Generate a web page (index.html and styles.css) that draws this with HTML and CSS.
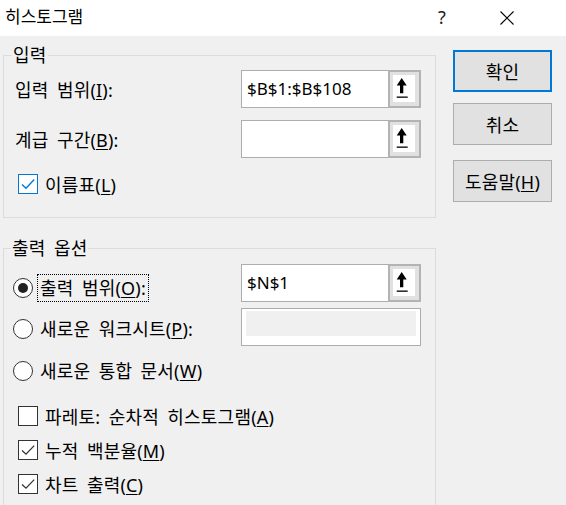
FILE: index.html
```html
<!DOCTYPE html>
<html lang="ko">
<head>
<meta charset="utf-8">
<title>히스토그램</title>
<link rel="stylesheet" href="styles.css">
</head>
<body>
<div class="titlebar">
  <span class="title">히스토그램</span>
  <span class="help">?</span>
  <svg class="close" width="14" height="14" viewBox="0 0 14 14"><path d="M0.5 0.5 L13.5 13.5 M13.5 0.5 L0.5 13.5" stroke="#000" stroke-width="1.1" fill="none"/></svg>
</div>
<div class="main">
  <div class="groups">
    <fieldset class="group group-input">
      <legend class="legend-input">입력</legend>
      <div class="row row-first">
        <span class="lbl">입력 범위(<u>I</u>):</span>
        <div class="refedit">
          <div class="ref-text">$B$1:$B$108</div>
          <div class="ref-btn"><span class="ref-face"><svg width="22" height="27" viewBox="0 0 22 27"><polygon points="8.7,3 13.7,10.5 10.3,10.5 10.3,18.3 7,18.3 7,10.5 3.7,10.5" fill="#000"/><rect x="3.7" y="21.5" width="11" height="1.3" fill="#000"/></svg></span></div>
        </div>
      </div>
      <div class="row row-second">
        <span class="lbl">계급 구간(<u>B</u>):</span>
        <div class="refedit">
          <div class="ref-text"></div>
          <div class="ref-btn"><span class="ref-face"><svg width="22" height="27" viewBox="0 0 22 27"><polygon points="8.7,3 13.7,10.5 10.3,10.5 10.3,18.3 7,18.3 7,10.5 3.7,10.5" fill="#000"/><rect x="3.7" y="21.5" width="11" height="1.3" fill="#000"/></svg></span></div>
        </div>
      </div>
      <div class="opt opt-labels">
        <span class="check check-hover"><svg width="18" height="18" viewBox="0 0 18 18"><path d="M3 9.5 L7 13.2 L15.2 4.6" stroke="#0078d7" stroke-width="1.4" fill="none"/></svg></span>
        <span class="opt-text">이름표(<u>L</u>)</span>
      </div>
    </fieldset>

    <fieldset class="group group-output">
      <legend class="legend-output">출력 옵션</legend>
      <div class="row row-out1">
        <div class="opt">
          <span class="radio radio-on"><span class="dot"></span></span>
          <span class="radio-text focus">출력 범위(<u>O</u>):</span>
        </div>
        <div class="refedit">
          <div class="ref-text">$N$1</div>
          <div class="ref-btn"><span class="ref-face"><svg width="22" height="27" viewBox="0 0 22 27"><polygon points="8.7,3 13.7,10.5 10.3,10.5 10.3,18.3 7,18.3 7,10.5 3.7,10.5" fill="#000"/><rect x="3.7" y="21.5" width="11" height="1.3" fill="#000"/></svg></span></div>
        </div>
      </div>
      <div class="row row-out2">
        <div class="opt opt-shift">
          <span class="radio"></span>
          <span class="radio-text">새로운 워크시트(<u>P</u>):</span>
        </div>
        <div class="disabled-field"><div class="disabled-inner"></div></div>
      </div>
      <div class="opt opt-out3">
        <span class="radio"></span>
        <span class="radio-text">새로운 통합 문서(<u>W</u>)</span>
      </div>
      <div class="opt opt-cb opt-cb-first">
        <span class="check"></span>
        <span class="opt-text">파레토: 순차적 히스토그램(<u>A</u>)</span>
      </div>
      <div class="opt opt-cb">
        <span class="check"><svg width="18" height="18" viewBox="0 0 18 18"><path d="M3 9.5 L7 13.2 L15.2 4.6" stroke="#333" stroke-width="1.3" fill="none"/></svg></span>
        <span class="opt-text">누적 백분율(<u>M</u>)</span>
      </div>
      <div class="opt opt-cb">
        <span class="check"><svg width="18" height="18" viewBox="0 0 18 18"><path d="M3 9.5 L7 13.2 L15.2 4.6" stroke="#333" stroke-width="1.3" fill="none"/></svg></span>
        <span class="opt-text">차트 출력(<u>C</u>)</span>
      </div>
    </fieldset>
  </div>

  <div class="buttons">
    <button class="btn btn-default">확인</button>
    <button class="btn btn-cancel">취소</button>
    <button class="btn btn-help">도움말(<u>H</u>)</button>
  </div>
</div>
</body>
</html>
```

FILE: styles.css
```css
html, body {
  margin: 0;
  padding: 0;
}

body {
  width: 566px;
  height: 505px;
  overflow: hidden;
  background: #f0f0f0;
  color: #000;
  font-family: "Noto Sans", "Noto Sans CJK KR", sans-serif;
  font-size: 18px;
  word-spacing: 3.5px;
  letter-spacing: 0.2px;
}

u {
  text-decoration: underline;
  text-underline-offset: 2px;
}

/* title bar */
.titlebar {
  height: 36px;
  background: #fff;
  display: flex;
  align-items: center;
  padding-bottom: 3px;
  box-sizing: border-box;
}

.title {
  margin-left: 5px;
  font-size: 17px;
  line-height: 20px;
  letter-spacing: 0;
}

.help {
  margin-left: auto;
  width: 20px;
  text-align: center;
  font-size: 18px;
  line-height: 20px;
  color: #222;
}

.close {
  margin-left: 48px;
  margin-right: 52px;
  margin-top: 2px;
}

/* main area */
.main {
  display: flex;
  padding-top: 9px;
}

.groups {
  margin-left: 3px;
  width: 433px;
  display: flex;
  flex-direction: column;
}

.group {
  margin: 0;
  padding: 0;
  border: 1px solid #dcdcdc;
  min-width: 0;
  display: flex;
  flex-direction: column;
}

.group legend {
  padding: 0 1px;
  line-height: 20px;
  height: 20px;
}

.legend-input {
  margin-left: 8px;
}

.legend-output {
  margin-left: 7px;
}

.group-input {
  padding-bottom: 19px;
}

.group-output {
  margin-top: 20px;
  padding-bottom: 30px;
}

.row {
  display: flex;
  align-items: center;
  height: 38px;
}

.row-first {
  margin-top: 5px;
}

.row-second {
  margin-top: 12px;
}

.lbl {
  flex: 1;
  padding-left: 11px;
}

/* ref edit */
.refedit {
  display: flex;
  width: 180px;
  height: 38px;
  margin-left: auto;
  margin-right: 14px;
}

.ref-text {
  flex: 1;
  box-sizing: border-box;
  border: 1px solid #adadad;
  border-right: none;
  background: #fff;
  padding-left: 5px;
  font-size: 17px;
  line-height: 36px;
  word-spacing: 0;
  letter-spacing: 0;
}

.ref-btn {
  width: 33px;
  box-sizing: border-box;
  border: 2px solid #b3b3b3;
  background: #e1e1e1;
  padding: 3px 4px 4px 3px;
  display: flex;
}

.ref-face {
  display: block;
  width: 22px;
  height: 27px;
  background: #fff;
}

.ref-face svg {
  display: block;
}

/* options */
.opt {
  display: flex;
  align-items: center;
  height: 28px;
}

.opt-labels {
  margin-top: 12px;
}

.check {
  width: 20px;
  height: 20px;
  box-sizing: border-box;
  border: 1px solid #333;
  background: #fff;
  margin-left: 14px;
  display: flex;
  align-items: center;
  justify-content: center;
}

.check svg {
  display: block;
}

.check-hover {
  border-color: #0078d7;
}

.opt-text {
  margin-left: 7px;
}

.radio {
  width: 20px;
  height: 20px;
  box-sizing: border-box;
  border: 1px solid #333;
  border-radius: 50%;
  background: #fff;
  margin-left: 9px;
  display: flex;
  align-items: center;
  justify-content: center;
}

.dot {
  width: 10px;
  height: 10px;
  border-radius: 50%;
  background: #222;
}

.radio-text {
  margin-left: 4px;
  border: 1px solid transparent;
  padding: 0 2px;
  height: 28px;
  line-height: 26px;
  box-sizing: border-box;
}

.focus {
  border: 1px dotted #000;
}

.row-out1 {
  margin-top: 6px;
  align-items: flex-end;
}

.row-out2 {
  margin-top: 6px;
}

.opt-shift {
  margin-top: 4px;
}

.opt-out3 {
  margin-top: 11px;
}

.opt-cb {
  margin-top: 6px;
}

.opt-cb-first {
  margin-top: 17px;
}

/* disabled field */
.disabled-field {
  width: 180px;
  height: 38px;
  box-sizing: border-box;
  margin-left: auto;
  margin-right: 14px;
  border: 1px solid #adadad;
  background: #fff;
  padding: 2px 4px 0 4px;
}

.disabled-inner {
  height: 25px;
  background: #f0f0f0;
}

/* buttons */
.buttons {
  margin-left: 17px;
  display: flex;
  flex-direction: column;
  padding-top: 5px;
}

.btn {
  width: 99px;
  height: 42px;
  box-sizing: border-box;
  border: 1px solid #adadad;
  background: #e1e1e1;
  font-family: "Noto Sans", "Noto Sans CJK KR", sans-serif;
  font-size: 18px;
  color: #000;
  padding: 0;
  margin: 0;
  word-spacing: 3.5px;
  letter-spacing: 0.2px;
}

.btn-default {
  border: 2px solid #0078d7;
}

.btn-cancel {
  margin-top: 11px;
}

.btn-help {
  margin-top: 15px;
}
```
